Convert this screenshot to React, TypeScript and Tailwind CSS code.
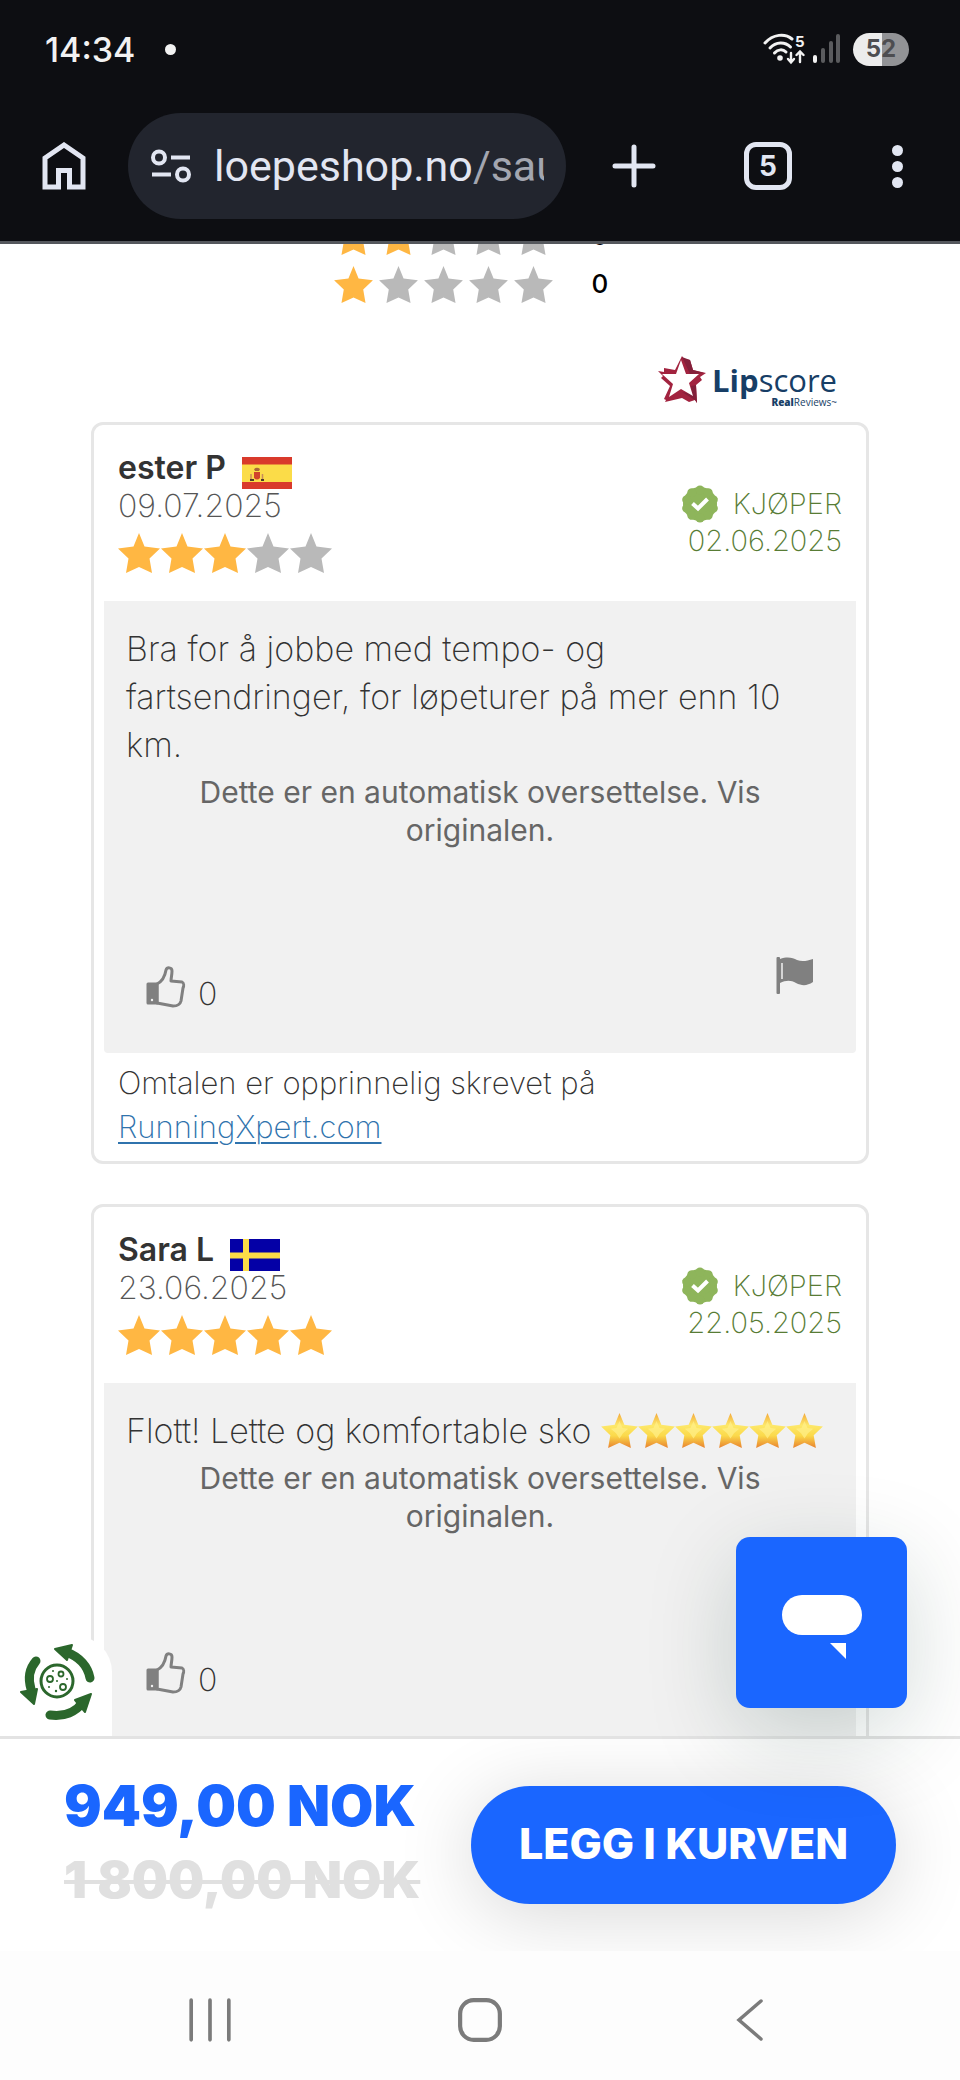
import React from 'react';

type Country = 'es' | 'se';

interface Review {
  name: string;
  country: Country;
  date: string;
  rating: number;
  text: string;
  emojiStars: number;
  bought: string;
  likes: number;
}

const reviews: Review[] = [
  {
    name: 'ester P',
    country: 'es',
    date: '09.07.2025',
    rating: 3,
    text: 'Bra for å jobbe med tempo- og\nfartsendringer, for løpeturer på mer enn 10 km.',
    emojiStars: 0,
    bought: '02.06.2025',
    likes: 0,
  },
  {
    name: 'Sara L',
    country: 'se',
    date: '23.06.2025',
    rating: 5,
    text: 'Flott! Lette og komfortable sko',
    emojiStars: 6,
    bought: '22.05.2025',
    likes: 0,
  },
];

const STAR_POINTS = '21,0 26.5,13.5 42,15.5 31.5,25.5 34,40 21,34 8,40 10.5,25.5 0,15.5 15.5,13.5';

const Star: React.FC<{ filled: boolean; className: string }> = ({ filled, className }) => (
  <svg viewBox="0 0 42 40" className={className} fill={filled ? '#ffb743' : '#b9b9b9'}>
    <polygon points={STAR_POINTS} />
  </svg>
);

const EmojiStar: React.FC = () => (
  <svg viewBox="0 0 42 40" className="inline-block h-[35px] w-[37px] align-[-5px]" role="img" aria-label="⭐">
    <defs>
      <linearGradient id="emoji-star" x1="0" y1="0" x2="0" y2="1">
        <stop offset="0" stopColor="#f3a93c" />
        <stop offset="0.35" stopColor="#fde86a" />
        <stop offset="0.65" stopColor="#fbd94a" />
        <stop offset="1" stopColor="#e8822f" />
      </linearGradient>
    </defs>
    <polygon points={STAR_POINTS} fill="url(#emoji-star)" />
    <polygon points="21,9 24.5,17 31,18 25,23 21,29 17,23 11,18 17.5,17" fill="#fff08a" opacity="0.7" />
  </svg>
);

const StatusIcons: React.FC = () => (
  <div className="flex items-center">
    <svg viewBox="0 0 42 32" className="h-8 w-[42px]" fill="none" stroke="#f2f2f2" strokeWidth="3" strokeLinecap="round">
      <path d="M2 10 C10 1 22 0 29 6" />
      <path d="M7 15 C13 8.500 22 8.500 27.500 14" />
      <path d="M11.500 20 C15 16 20 16 23 19" />
      <circle cx="17" cy="25" r="2.800" fill="#f2f2f2" stroke="none" />
      <path d="M28 20 V29 M25 26 L28 29.500 L31 26" strokeWidth="2.400" />
      <path d="M37 29 V19 M33.500 22 L37 18.500 L40.500 22" strokeWidth="2.400" />
      <text x="32" y="14" fontSize="15" fontWeight="700" fontFamily="Inter, sans-serif" fill="#f2f2f2" stroke="none">5</text>
    </svg>
    <svg viewBox="0 0 28 30" className="ml-2 h-[30px] w-7" fill="#5a5b5e">
      <rect x="0" y="21" width="4" height="8" rx="2" fill="#f2f2f2" />
      <rect x="8" y="14" width="4" height="15" rx="2" />
      <rect x="16" y="7" width="4" height="22" rx="2" />
      <rect x="23" y="0" width="4" height="29" rx="2" />
    </svg>
    <div className="ml-3 flex h-[33px] w-14 items-center justify-center rounded-full bg-linear-to-r from-[#ececec] from-52% to-[#929396] to-52% text-2xl font-bold text-[#4d4d50]">
      52
    </div>
  </div>
);

const BrowserBar: React.FC = () => (
  <header className="shrink-0 border-b-[3px] border-[#55585d] bg-[#0d0e12] text-[#e2e6f2]">
    <div className="flex h-[98px] items-center justify-between pr-[51px] pl-[45px]">
      <div className="flex items-center gap-[30px] text-[34px] font-medium text-[#f2f2f2]">
        14:34
        <span className="size-[11px] rounded-full bg-[#f2f2f2]" />
      </div>
      <StatusIcons />
    </div>
    <div className="flex h-[143px] items-start pt-[15px] pl-10">
      <button aria-label="Hjem" className="flex h-[106px] w-[88px] items-center">
        <svg viewBox="0 0 48 48" className="size-12" fill="none" stroke="currentColor" strokeWidth="5">
          <path d="M5 45 V16 L24 3 L43 16 V45 H29.500 V28.500 H18.500 V45 Z" />
        </svg>
      </button>
      <div className="flex h-[106px] min-w-0 flex-1 items-center rounded-full bg-[#22252e] pr-[22px] pl-[22px]">
        <svg viewBox="0 0 42 36" className="h-9 w-[42px] shrink-0" fill="none" stroke="currentColor" strokeWidth="4">
          <circle cx="9" cy="9.500" r="6" />
          <path d="M21 9.500 H40 M2 26.500 H21" />
          <circle cx="33" cy="26.500" r="6" />
        </svg>
        <div className="ml-[22px] min-w-0 flex-1 overflow-hidden font-[Roboto,sans-serif] text-[43px] whitespace-nowrap">
          loepeshop.no<span className="text-[#a3a6b0]">/sau</span>
        </div>
      </div>
      <button aria-label="Ny fane" className="flex h-[106px] w-[136px] items-center justify-center">
        <svg viewBox="0 0 44 44" className="size-11" stroke="currentColor" strokeWidth="5" strokeLinecap="round">
          <path d="M22 3 V41 M3 22 H41" />
        </svg>
      </button>
      <button aria-label="Faner" className="flex h-[106px] w-[132px] items-center justify-center">
        <span className="flex size-12 items-center justify-center rounded-xl border-[5px] border-current text-[28px] font-bold">5</span>
      </button>
      <button aria-label="Meny" className="flex h-[106px] w-[126px] flex-col items-center justify-center gap-[5px]">
        <span className="size-[11px] rounded-full bg-current" />
        <span className="size-[11px] rounded-full bg-current" />
        <span className="size-[11px] rounded-full bg-current" />
      </button>
    </div>
  </header>
);

const SummaryRow: React.FC<{ rating: number; count: number }> = ({ rating, count }) => (
  <div className="flex h-12 items-center justify-center">
    {[1, 2, 3, 4, 5].map((n) => (
      <span key={n} className="flex w-[45px] justify-center">
        <Star filled={n <= rating} className="h-[37px] w-[39px]" />
      </span>
    ))}
    <span className="ml-9 w-[38px] text-[26px] leading-8 font-medium text-black">{count}</span>
  </div>
);

const LipscoreLogo: React.FC = () => (
  <div className="mr-[123px] flex h-[114px] items-end justify-end pb-[14px] text-[#173e66]">
    <svg viewBox="0 0 48 48" className="mb-1 size-12">
      <polygon points="24,0 26,3 32,4 35,14 48,17 42,21 44,24 38,29 39,47 37,44 31,46 24,42 7,46 8,44 6,43 12,30 3,22 5,20 0,15 6,16 6,12 17,14" fill="#a2233f" />
      <polygon points="32,4 35,14 46,17 32,18 24,1" fill="#83203a" />
      <polygon points="39,47 37,44 24,36 34,38 33,30 38,29" fill="#83203a" />
      <polygon points="23,4 28,18 41,18 31,27 35,40 23,33 11,41 15,28 4,18 18,18" fill="#fff" />
    </svg>
    <div className="ml-1.5 flex flex-col items-end font-['Open_Sans',sans-serif]">
      <div className="text-[31px] leading-8">
        <span className="font-bold">Lip</span>score
      </div>
      <div className="text-[10px] leading-3 font-medium">
        <span className="font-extrabold">Real</span>Reviews~
      </div>
    </div>
  </div>
);

const FlagIcon: React.FC<{ country: Country }> = ({ country }) =>
  country === 'es' ? (
    <svg viewBox="0 0 50 32" className="h-8 w-[50px]">
      <rect width="50" height="32" fill="#d93a2b" />
      <rect y="7.500" width="50" height="17.500" fill="#fbdc48" />
      <path d="M12 12 q3 -2.500 6 0 l-1 2 h-4 z" fill="#a9663a" />
      <path d="M12 15 h6 v6 q-3 3 -6 0 z" fill="#d1452c" />
      <path d="M9 17 v6 M20.500 17 v6" stroke="#c98d5a" strokeWidth="1.500" />
      <path d="M8 22 h4 v2 h-4 z M19 22 h3 v2 h-3 z" fill="#4a3b2a" />
    </svg>
  ) : (
    <svg viewBox="0 0 50 32" className="h-8 w-[50px]">
      <rect width="50" height="32" fill="#0400a6" />
      <path d="M0 16.500 H50 M16 0 V32" stroke="#fbdc48" strokeWidth="6" />
    </svg>
  );

const VerifiedBadge: React.FC = () => (
  <svg viewBox="0 0 38 38" className="size-[38px]">
    <g fill="#8eb55b">
      <circle cx="19" cy="19" r="17" />
      {[0, 1, 2, 3, 4, 5, 6, 7, 8, 9].map((n) => (
        <circle key={n} cx="19" cy="5" r="4.500" transform={`rotate(${n * 36} 19 19)`} />
      ))}
    </g>
    <path d="M11.500 18.500 L17 23.500 L26.500 14" fill="none" stroke="#fff" strokeWidth="4" />
  </svg>
);

const ThumbIcon: React.FC = () => (
  <svg viewBox="0 0 40 42" className="h-[42px] w-10" fill="none" stroke="#808080" strokeWidth="3" strokeLinejoin="round">
    <path d="M11 18 C17 15 19 10 20 4 C21 1 26 1 26 5 C26 9 25 12 25 15 L36 16 C38 17 38 20 37 22 L35 35 C34 39 31 40 27 40 L11 37 Z" />
    <path d="M2 18 H11 V37 H2 Z" fill="#808080" />
    <circle cx="6" cy="34" r="1.200" fill="#f1f1f1" stroke="none" />
  </svg>
);

const ReportIcon: React.FC = () => (
  <svg viewBox="0 0 38 38" className="size-[38px]" fill="#808080">
    <rect x="0.500" y="1" width="3.500" height="37" rx="1" />
    <path d="M4 3 C12 0 17 2 21 4 C26 6 31 5 37 3 V26 C31 30 26 30 20 27 C15 24 10 24 4 27 Z" />
    <path d="M6 7 V23" stroke="#f1f1f1" strokeWidth="1.500" />
  </svg>
);

const ReviewCard: React.FC<{ review: Review }> = ({ review }) => (
  <article className="rounded-xl border-[3px] border-[#e6e6e6] px-2.5 text-[#333333]">
    <div className="flex items-start justify-between px-3.5 pt-6 pb-7">
      <div>
        <div className="flex h-[38px] items-center gap-4 text-[32px] font-semibold">
          {review.name}
          <span className="mt-2.5">
            <FlagIcon country={review.country} />
          </span>
        </div>
        <div className="text-[32px] leading-[38px] font-extralight text-[#555555]">{review.date}</div>
        <div className="mt-2 flex gap-px" role="img" aria-label={`${review.rating} av 5`}>
          {[1, 2, 3, 4, 5].map((n) => (
            <Star key={n} filled={n <= review.rating} className="h-10 w-[42px]" />
          ))}
        </div>
      </div>
      <div className="mt-9 text-right text-[29px] leading-9 font-extralight text-[#587c35]">
        <div className="flex items-center justify-end gap-3.5">
          <VerifiedBadge />
          KJØPER
        </div>
        <div>{review.bought}</div>
      </div>
    </div>

    <div className="rounded-b bg-[#f1f1f1] px-[22px] pt-6 pb-11">
      <p className="text-[34px] leading-[48px] font-extralight whitespace-pre-line">
        {review.text}{' '}
        {Array.from({ length: review.emojiStars }, (_, n) => (
          <EmojiStar key={n} />
        ))}
      </p>
      <p className="mt-1 px-10 text-center text-[30px] leading-[38px] text-[#666666]">
        Dette er en automatisk oversettelse. Vis originalen.
      </p>
      <div className="mt-[100px] flex h-[60px] items-center justify-between px-5">
        <button className="mt-4 flex items-end gap-3 text-[32px] leading-7 font-extralight">
          <ThumbIcon />
          {review.likes}
        </button>
        <button aria-label="Rapporter" className="mb-2">
          <ReportIcon />
        </button>
      </div>
    </div>

    <p className="px-3.5 pt-2 pb-3 text-[31px] leading-[44px] font-extralight">
      Omtalen er opprinnelig skrevet på
      <br />
      <a href="#runningxpert" className="text-[#2f73ad] underline decoration-2 underline-offset-4">
        RunningXpert.com
      </a>
    </p>
  </article>
);

const CookieIcon: React.FC = () => (
  <svg viewBox="0 0 76 78" className="h-[78px] w-[76px]">
    {/* arrows, clockwise from the left */}
    <g fill="none" stroke="#2b672c" strokeWidth="9" strokeLinecap="round">
      <path d="M16 18 C9 26 8 36 11 46" />
      <path d="M46 9 C60 14 68 24 70 35" />
      <path d="M30 72 C44 74 56 69 63 59" />
    </g>
    <g fill="#2b672c" stroke="#2b672c" strokeWidth="2" strokeLinejoin="round">
      <polygon points="1,49 17,46 14,61" />
      <polygon points="35,6 52,2 47,17" />
      <polygon points="71,51 55,57 65,69" />
    </g>
    <circle cx="37" cy="38" r="16" fill="none" stroke="#2b672c" strokeWidth="3" />
    <g fill="none" stroke="#2b672c" strokeWidth="1.800">
      <circle cx="30" cy="36" r="3" />
      <circle cx="41" cy="31" r="2.500" />
      <circle cx="43" cy="44" r="3" />
    </g>
    <g fill="#2b672c">
      <circle cx="33" cy="28" r="1" />
      <circle cx="37" cy="38" r="1" />
      <circle cx="47" cy="36" r="1" />
      <circle cx="29" cy="44" r="1" />
      <circle cx="36" cy="48" r="1.200" />
    </g>
  </svg>
);

const BuyBar: React.FC = () => (
  <div className="relative shrink-0">
    <button
      aria-label="Informasjonskapsler"
      className="absolute bottom-full left-0 flex h-[100px] w-28 items-center rounded-tr-[36px] bg-white pb-2 pl-5"
    >
      <CookieIcon />
    </button>

    <div className="flex h-[215px] items-center justify-between overflow-hidden border-t-[3px] border-[#e3e3e3] bg-white pr-16 pb-1 pl-16">
      <div className="font-black whitespace-nowrap">
        <div className="text-[56px] leading-[74px] text-[#1a66ff]">949,00 NOK</div>
        <del className="block text-[51px] leading-[74px] text-[#e0e0e0] decoration-4">1 800,00 NOK</del>
      </div>
      <button className="mt-1 h-[118px] w-[425px] rounded-full bg-[#1a66ff] pb-1 text-[43px] font-extrabold text-white shadow-[0_10px_80px_rgba(0,0,0,0.16)]">
        LEGG I KURVEN
      </button>
    </div>

    <button
      aria-label="Chat"
      className="absolute right-[53px] bottom-full mb-7 flex size-[171px] items-center justify-center rounded-[14px] bg-[#1a66ff] shadow-[0_24px_90px_rgba(0,50,40,0.18)]"
    >
      <svg viewBox="0 0 80 64" className="mt-2 h-16 w-20" fill="#fff">
        <rect width="80" height="40" rx="20" />
        <polygon points="48,48 64,48 64,64" />
      </svg>
    </button>
  </div>
);

const NavBar: React.FC = () => (
  <nav className="relative flex h-[129px] shrink-0 items-center justify-center bg-[#fdfdfd] pt-2 text-[#7b7b7b]">
    <button aria-label="Siste apper" className="flex w-[270px] justify-center">
      <svg viewBox="0 0 42 44" className="h-[46px] w-11" stroke="currentColor" strokeWidth="3.500" strokeLinecap="round">
        <path d="M3 3 V41 M21 3 V41 M39 3 V41" />
      </svg>
    </button>
    <button aria-label="Hjem" className="flex w-[270px] justify-center">
      <svg viewBox="0 0 44 44" className="size-[46px]" fill="none" stroke="currentColor" strokeWidth="4">
        <rect x="3" y="3" width="38" height="38" rx="13" />
      </svg>
    </button>
    <button aria-label="Tilbake" className="flex w-[270px] justify-center">
      <svg viewBox="0 0 28 44" className="h-[46px] w-7" fill="none" stroke="currentColor" strokeWidth="3.500" strokeLinecap="round">
        <path d="M25 3 L3 22 L25 41" />
      </svg>
    </button>
  </nav>
);

export default function App() {
  return (
    <div className="flex h-screen flex-col bg-white font-[Inter,sans-serif]">
      <BrowserBar />
      <main className="min-h-0 flex-1 overflow-hidden">
        <div className="-mt-8">
          <SummaryRow rating={2} count={0} />
          <SummaryRow rating={1} count={0} />
          <LipscoreLogo />
          <div className="mx-[91px] flex flex-col gap-10">
            {reviews.map((review) => (
              <ReviewCard key={review.name} review={review} />
            ))}
          </div>
        </div>
      </main>
      <BuyBar />
      <NavBar />
    </div>
  );
}
